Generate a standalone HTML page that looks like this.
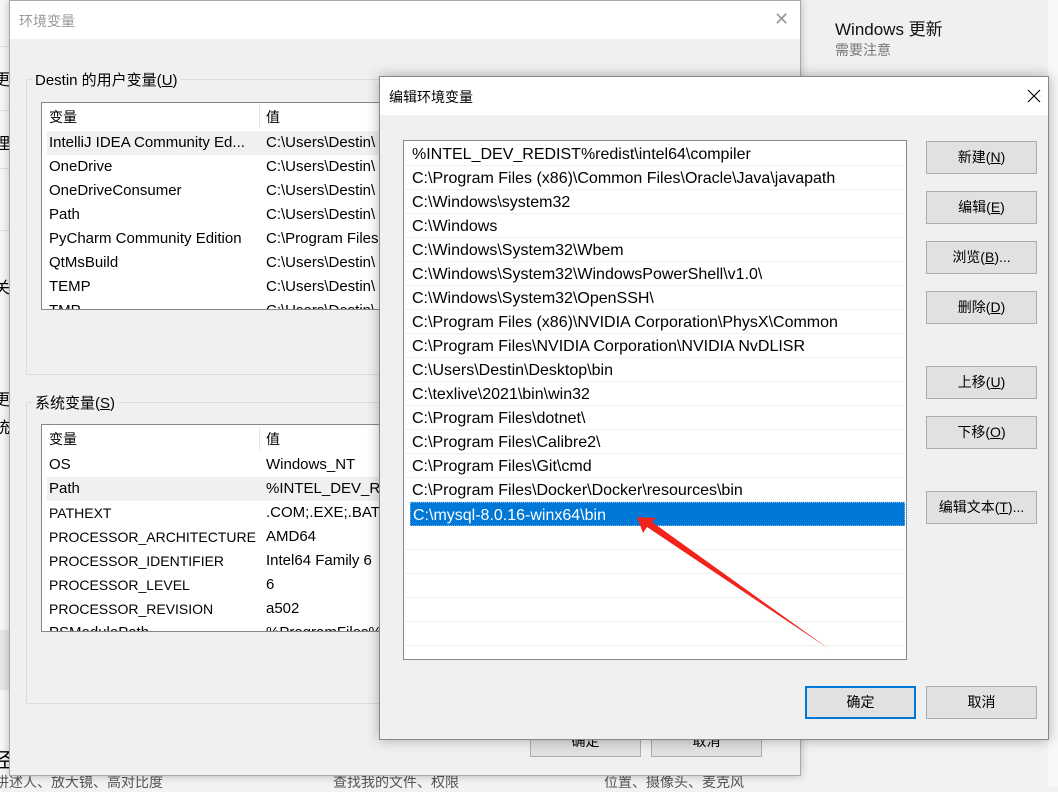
<!DOCTYPE html>
<html><head><meta charset="utf-8"><style>
*{margin:0;padding:0;box-sizing:border-box}
body{width:1058px;height:787px;overflow:hidden;background:#f2f2f2;font-family:"Liberation Sans","Noto Sans CJK SC",sans-serif;font-size:15px;color:#000;position:relative}
.a{position:absolute;white-space:nowrap}
.btn{position:absolute;background:#e1e1e1;border:1px solid #adadad;text-align:center;font-size:14px;line-height:30px}
.row{position:absolute;left:0;right:0;height:24px;line-height:25px;padding-left:7px;border-bottom:1px solid #f0f0f0;font-size:16px}
.lr{position:absolute;height:24px;line-height:24px;font-size:15px}
.sm{font-size:14px}
u{text-decoration:underline}
</style></head><body>
<div class="a" style="left:0;top:0;width:10px;height:787px;background:#f7f7f7"></div>
<div class="a" style="left:0;top:46px;width:10px;height:1px;background:#ddd"></div>
<div class="a" style="left:0;top:110px;width:10px;height:1px;background:#ddd"></div>
<div class="a" style="left:0;top:168px;width:10px;height:1px;background:#ddd"></div>
<div class="a" style="left:0;top:230px;width:10px;height:1px;background:#ddd"></div>
<div class="a" style="left:0;top:630px;width:10px;height:60px;background:#e6e6e6"></div>
<div class="a" style="left:-6px;top:66px;font-size:16px">更</div>
<div class="a" style="left:-6px;top:130px;font-size:16px">理</div>
<div class="a" style="left:-6px;top:274px;font-size:16px">关</div>
<div class="a" style="left:-6px;top:386px;font-size:16px">更</div>
<div class="a" style="left:-6px;top:414px;font-size:16px">统</div>
<div class="a" style="left:-8px;top:744px;font-size:20px">径</div>
<div class="a" style="left:-5px;top:772px;font-size:14px;color:#555">讲述人、放大镜、高对比度</div>
<div class="a" style="left:333px;top:772px;font-size:14px;color:#555">查找我的文件、权限</div>
<div class="a" style="left:604px;top:772px;font-size:14px;color:#555">位置、摄像头、麦克风</div>
<div class="a" style="left:800px;top:0;width:258px;height:76px;background:#f0f0f0"></div>
<div class="a" style="left:835px;top:15px;font-size:17px;color:#111">Windows 更新</div>
<div class="a" style="left:835px;top:40px;font-size:14px;color:#777">需要注意</div>
<div class="a" style="left:1048px;top:0;width:10px;height:787px;background:#f8f8f8"></div>

<div class="a" style="left:9px;top:0;width:792px;height:776px;background:#f0f0f0;border:1px solid #aaa;box-shadow:0 0 8px rgba(0,0,0,.25)">
  <div class="a" style="left:0;top:0;width:790px;height:38px;background:#fff"></div>
  <div class="a" style="left:9px;top:10px;font-size:14px;color:#999">环境变量</div>
  <div class="a" style="left:764px;top:8px;font-size:18px;color:#999">✕</div>
  <div class="a" style="left:16px;top:78px;width:800px;height:296px;border:1px solid #dcdcdc"></div>
  <div class="a" style="left:22px;top:68px;background:#f0f0f0;padding:0 3px;font-size:15px">Destin 的用户变量(<u>U</u>)</div>
  <div class="a" style="left:31px;top:101px;width:400px;height:208px;background:#fff;border:1px solid #828790;overflow:hidden">
    <div class="lr" style="left:7px;top:2px;font-size:14px">变量</div>
    <div class="a" style="left:217px;top:2px;width:1px;height:24px;background:#e5e5e5"></div>
    <div class="lr" style="left:224px;top:2px;font-size:14px">值</div>
    <div class="a" style="left:5px;top:28px;width:400px;height:24px;background:#f0f0f0"></div>
    <div class="lr" style="left:7px;top:28px">IntelliJ IDEA Community Ed...</div><div class="lr" style="left:224px;top:28px">C:\Users\Destin\</div>
    <div class="lr" style="left:7px;top:52px">OneDrive</div><div class="lr" style="left:224px;top:52px">C:\Users\Destin\</div>
    <div class="lr" style="left:7px;top:76px">OneDriveConsumer</div><div class="lr" style="left:224px;top:76px">C:\Users\Destin\</div>
    <div class="lr" style="left:7px;top:100px">Path</div><div class="lr" style="left:224px;top:100px">C:\Users\Destin\</div>
    <div class="lr" style="left:7px;top:124px">PyCharm Community Edition</div><div class="lr" style="left:224px;top:124px">C:\Program Files</div>
    <div class="lr" style="left:7px;top:148px">QtMsBuild</div><div class="lr" style="left:224px;top:148px">C:\Users\Destin\</div>
    <div class="lr" style="left:7px;top:172px">TEMP</div><div class="lr" style="left:224px;top:172px">C:\Users\Destin\</div>
    <div class="lr" style="left:7px;top:196px">TMP</div><div class="lr" style="left:224px;top:196px">C:\Users\Destin\</div>
  </div>
  <div class="a" style="left:16px;top:401px;width:800px;height:302px;border:1px solid #dcdcdc"></div>
  <div class="a" style="left:22px;top:391px;background:#f0f0f0;padding:0 3px;font-size:15px">系统变量(<u>S</u>)</div>
  <div class="a" style="left:31px;top:423px;width:400px;height:208px;background:#fff;border:1px solid #828790;overflow:hidden">
    <div class="lr" style="left:7px;top:2px;font-size:14px">变量</div>
    <div class="a" style="left:217px;top:2px;width:1px;height:24px;background:#e5e5e5"></div>
    <div class="lr" style="left:224px;top:2px;font-size:14px">值</div>
    <div class="a" style="left:5px;top:52px;width:400px;height:24px;background:#f0f0f0"></div>
    <div class="lr" style="left:7px;top:28px">OS</div><div class="lr" style="left:224px;top:28px">Windows_NT</div>
    <div class="lr" style="left:7px;top:52px">Path</div><div class="lr" style="left:224px;top:52px">%INTEL_DEV_RE</div>
    <div class="lr sm" style="left:7px;top:76px">PATHEXT</div><div class="lr" style="left:224px;top:76px">.COM;.EXE;.BAT;</div>
    <div class="lr sm" style="left:7px;top:100px">PROCESSOR_ARCHITECTURE</div><div class="lr" style="left:224px;top:100px">AMD64</div>
    <div class="lr sm" style="left:7px;top:124px">PROCESSOR_IDENTIFIER</div><div class="lr" style="left:224px;top:124px">Intel64 Family 6</div>
    <div class="lr sm" style="left:7px;top:148px">PROCESSOR_LEVEL</div><div class="lr" style="left:224px;top:148px">6</div>
    <div class="lr sm" style="left:7px;top:172px">PROCESSOR_REVISION</div><div class="lr" style="left:224px;top:172px">a502</div>
    <div class="lr" style="left:7px;top:196px">PSModulePath</div><div class="lr" style="left:224px;top:196px">%ProgramFiles%</div>
  </div>
  <div class="btn" style="left:520px;top:724px;width:111px;height:32px">确定</div>
  <div class="btn" style="left:641px;top:724px;width:111px;height:32px">取消</div>
</div>

<div class="a" style="left:379px;top:76px;width:670px;height:664px;background:#f0f0f0;border:1px solid #888;box-shadow:0 0 12px rgba(0,0,0,.3)">
  <div class="a" style="left:0;top:0;width:668px;height:38px;background:#fff"></div>
  <div class="a" style="left:9px;top:10px;font-size:14px">编辑环境变量</div>
  <svg class="a" style="left:646px;top:11px" width="16" height="16"><path d="M2 2L14 14M14 2L2 14" stroke="#000" stroke-width="1.2"/></svg>
  <div class="a" style="left:23px;top:63px;width:504px;height:520px;background:#fff;border:1px solid #828790;overflow:hidden">
    <div style="position:absolute;left:1px;right:1px;top:1px">
      <div class="row" style="top:0">%INTEL_DEV_REDIST%redist\intel64\compiler</div>
      <div class="row" style="top:24px">C:\Program Files (x86)\Common Files\Oracle\Java\javapath</div>
      <div class="row" style="top:48px">C:\Windows\system32</div>
      <div class="row" style="top:72px">C:\Windows</div>
      <div class="row" style="top:96px">C:\Windows\System32\Wbem</div>
      <div class="row" style="top:120px">C:\Windows\System32\WindowsPowerShell\v1.0\</div>
      <div class="row" style="top:144px">C:\Windows\System32\OpenSSH\</div>
      <div class="row" style="top:168px">C:\Program Files (x86)\NVIDIA Corporation\PhysX\Common</div>
      <div class="row" style="top:192px">C:\Program Files\NVIDIA Corporation\NVIDIA NvDLISR</div>
      <div class="row" style="top:216px">C:\Users\Destin\Desktop\bin</div>
      <div class="row" style="top:240px">C:\texlive\2021\bin\win32</div>
      <div class="row" style="top:264px">C:\Program Files\dotnet\</div>
      <div class="row" style="top:288px">C:\Program Files\Calibre2\</div>
      <div class="row" style="top:312px">C:\Program Files\Git\cmd</div>
      <div class="row" style="top:336px">C:\Program Files\Docker\Docker\resources\bin</div>
      <div class="row" style="top:360px;left:5px;right:0;padding-left:2px;background:#0078d7;color:#fff;border:1px dotted #7fb6e6">C:\mysql-8.0.16-winx64\bin</div>
      <div class="row" style="top:384px"></div>
      <div class="row" style="top:408px"></div>
      <div class="row" style="top:432px"></div>
      <div class="row" style="top:456px"></div>
      <div class="row" style="top:480px"></div>
    </div>
  </div>
  <div class="btn" style="left:546px;top:64px;width:111px;height:33px">新建(<u>N</u>)</div>
  <div class="btn" style="left:546px;top:114px;width:111px;height:33px">编辑(<u>E</u>)</div>
  <div class="btn" style="left:546px;top:164px;width:111px;height:33px">浏览(<u>B</u>)...</div>
  <div class="btn" style="left:546px;top:214px;width:111px;height:33px">删除(<u>D</u>)</div>
  <div class="btn" style="left:546px;top:289px;width:111px;height:33px">上移(<u>U</u>)</div>
  <div class="btn" style="left:546px;top:339px;width:111px;height:33px">下移(<u>O</u>)</div>
  <div class="btn" style="left:546px;top:414px;width:111px;height:33px">编辑文本(<u>T</u>)...</div>
  <div class="btn" style="left:425px;top:609px;width:111px;height:33px;border:2px solid #0078d7;line-height:29px">确定</div>
  <div class="btn" style="left:546px;top:609px;width:111px;height:33px">取消</div>
</div>

<svg class="a" style="left:0;top:0" width="1058" height="787">
  <polygon points="637,517 656,518 652,522 829,649 647,527 643,533" fill="#f2231b"/>
</svg>
</body></html>
